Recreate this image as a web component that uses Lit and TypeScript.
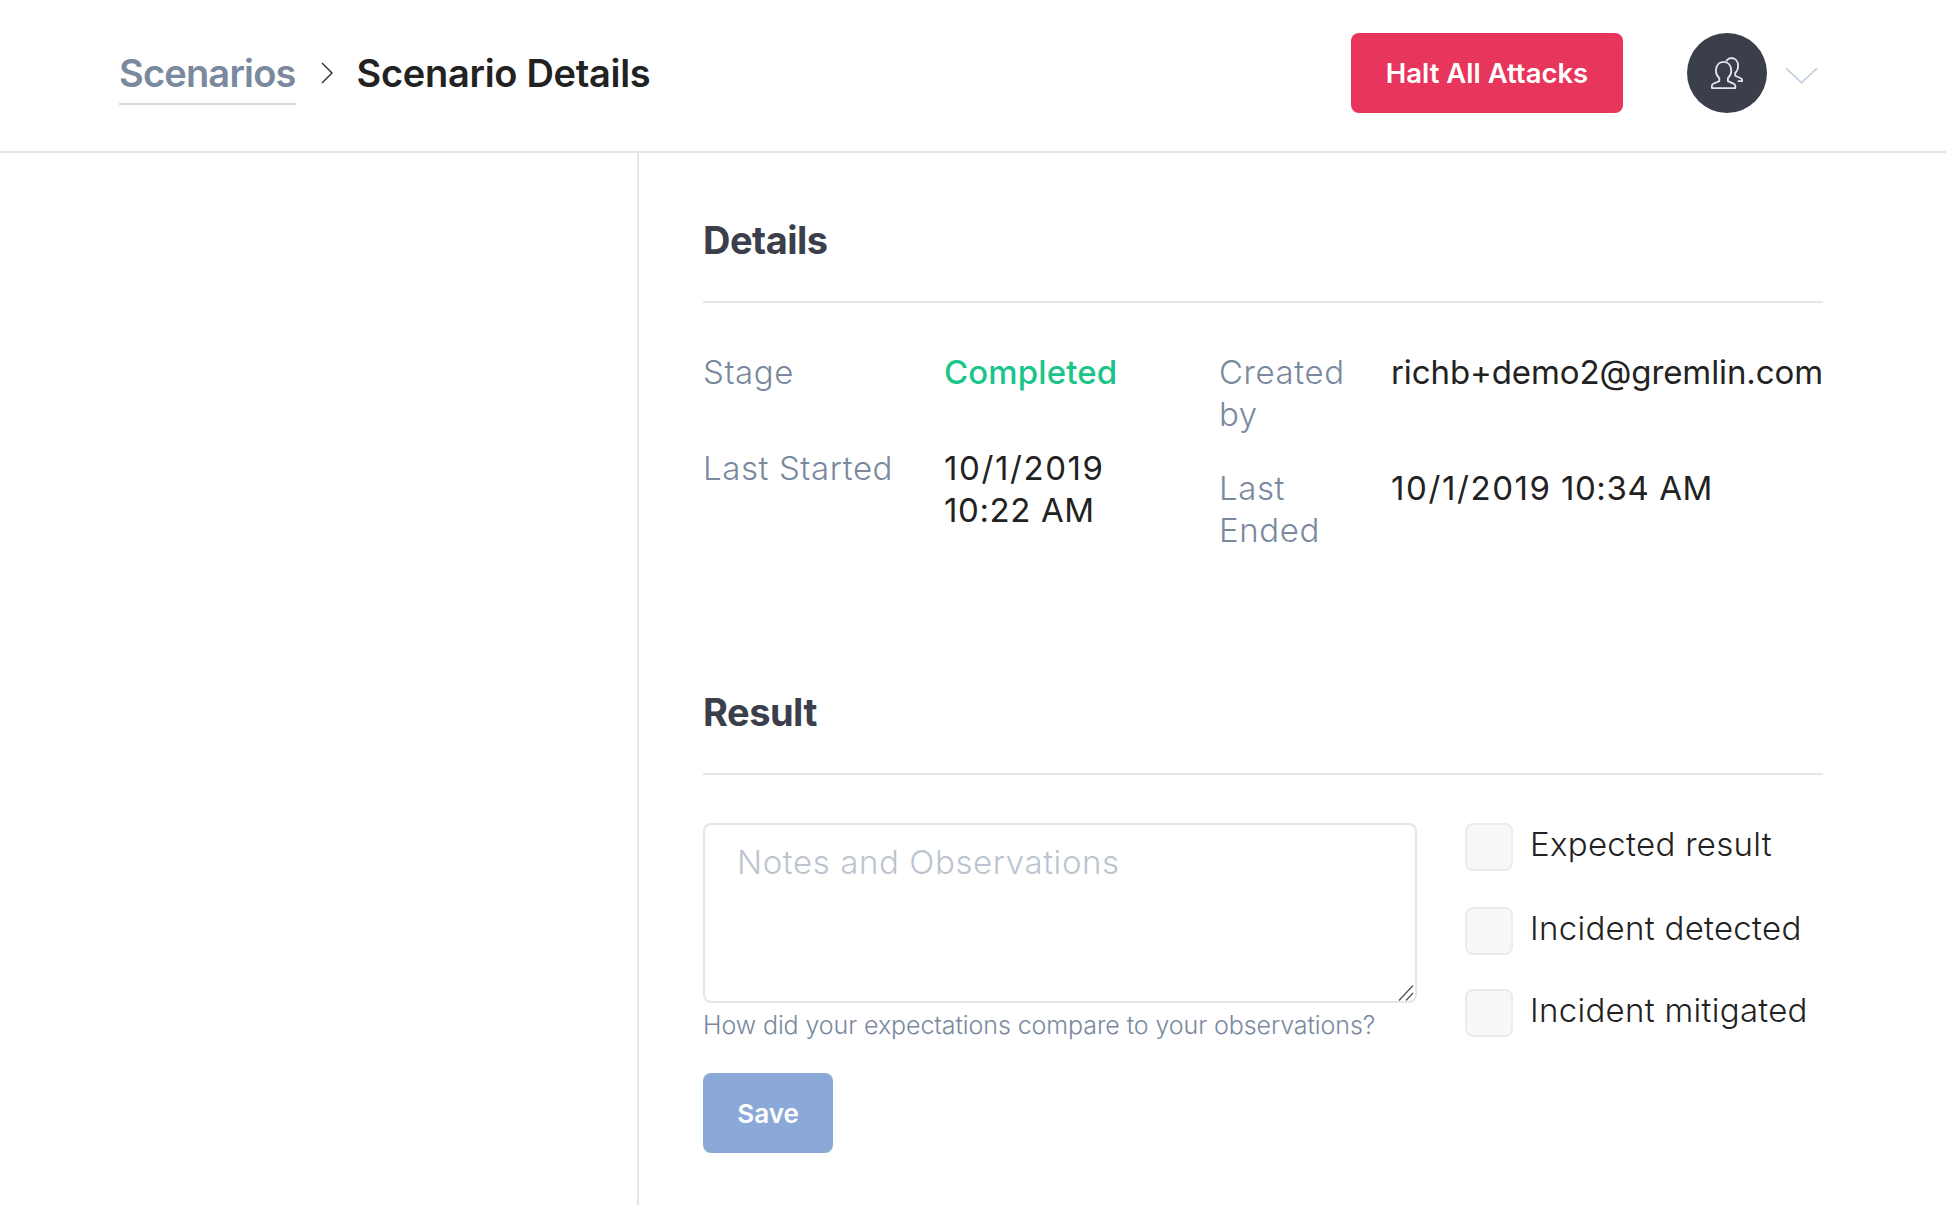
import { LitElement, html, css } from "lit";
import { customElement } from "lit/decorators.js";

@customElement("app-root")
export class AppRoot extends LitElement {
  static styles = css`
    :host { display: block; height: 1205px; overflow: hidden; background: #fff; font-family: Inter, "Liberation Sans", sans-serif; color: #222; }
    * { box-sizing: border-box; }
    header { height: 153px; border-bottom: 2px solid #e6e6e6; display: flex; align-items: flex-start; padding: 33px 0 0 119px; }
    .crumbs { display: flex; align-items: center; height: 80px; flex: 1; font-size: 38px; font-weight: 600; letter-spacing: -0.3px; }
    .link { color: #7a899e; border-bottom: 2px solid #d3d9e1; height: 62px; line-height: 60px; margin-top: 2px; letter-spacing: -0.8px; }
    .sep { margin: 0 25px 0 25px; display: block; }
    .current { margin-left: -1px; }
    .halt { width: 272px; height: 80px; border-radius: 8px; background: #e8355c; color: #fff; font: 600 27.5px Inter, sans-serif; border: 0; padding: 0; }
    .avatar { width: 80px; height: 80px; border-radius: 50%; background: #3b3f4c; margin-left: 64px; display: flex; align-items: center; justify-content: center; }
    .caret { margin: 34px 128px 0 18px; display: block; width: 33px; }
    main { display: flex; height: 1052px; }
    aside { width: 639px; border-right: 2px solid #e6e6e6; flex: none; }
    .content { width: 1120px; margin-left: 64px; padding-top: 64px; }
    h2 { margin: 0; font-size: 38px; line-height: 46px; font-weight: 700; color: #3b3f4c; letter-spacing: -0.5px; padding-bottom: 38px; border-bottom: 2px solid #e6e6e6; }
    .details { display: flex; padding-top: 48px; height: 386px; font-size: 33px; line-height: 42px; }
    .pair { display: grid; align-content: start; }
    .left { width: 516px; grid-template-columns: 241px 1fr; row-gap: 54px; }
    .right { flex: 1; grid-template-columns: 172px 1fr; row-gap: 32px; }
    .k { color: #7a899e; font-weight: 300; letter-spacing: 0.6px; }
    .v { color: #222; font-weight: 400; white-space: nowrap; letter-spacing: -0.1px; }
    .ok { color: #1bc48a; font-weight: 500; letter-spacing: 0.1px; }
    .date { letter-spacing: 1.6px; }
    .time { letter-spacing: 0.6px; }
    .result { display: flex; margin-top: 48px; }
    .form { width: 714px; flex: none; }
    .field { position: relative; height: 180px; }
    textarea { display: block; width: 714px; height: 180px; border: 2px solid #e6e6e6; border-radius: 8px; padding: 16px 32px; font: 300 33px/42px Inter, sans-serif; letter-spacing: 0.6px; resize: none; outline: 0; }
    textarea::placeholder { color: #bcc4d0; opacity: 1; }
    .grip { position: absolute; right: 3px; bottom: 2px; display: block; }
    .hint { font-size: 25px; line-height: 34px; color: #7a899e; font-weight: 300; margin-top: 5px; letter-spacing: -0.09px; }
    .save { display: block; width: 130px; height: 80px; margin-top: 31px; background: #8aa9d8; color: #fff; border: 0; border-radius: 8px; font: 600 26px Inter, sans-serif; padding: 0; }
    .checks { margin-left: 48px; font-size: 33px; line-height: 42px; font-weight: 300; color: #222; letter-spacing: 0.3px; }
    .check { display: flex; height: 48px; margin-bottom: 36px; align-items: flex-start; white-space: nowrap; }
    .check:nth-child(2) { margin-bottom: 34px; }
    .box { width: 48px; height: 48px; border: 2px solid #ececec; border-radius: 8px; background: #f8f8f8; margin-right: 17px; flex: none; }
  `;

  render() {
    return html`
      <header>
        <div class="crumbs">
          <span class="link">Scenarios</span>
          <svg class="sep" width="12" height="22" viewBox="0 0 12 22" fill="none" stroke="#222" stroke-width="1.3"><path d="M1 1l10 10L1 21"/></svg>
          <span class="current">Scenario Details</span>
        </div>
        <button class="halt">Halt All Attacks</button>
        <div class="avatar">
          <svg width="32" height="32" viewBox="0 0 32 32" fill="none" stroke="#e4e6ea" stroke-width="1.8" stroke-linejoin="round" stroke-linecap="round">
            <path d="M.9 31.100v-2.300c0-1 .5-1.600 1.400-2l6-2.600v-3c-2-1.800-3.400-4.300-3.400-7.400 0-5.400 3.200-9 7.700-9s7.700 3.600 7.700 9c0 3.100-1.400 5.600-3.400 7.400v3l6 2.600c.9.400 1.400 1 1.400 2v2.300z"/>
            <path d="M15.500 3.600C17 1.900 18.800 1 20.500 1c3.900 0 6.600 3.300 6.600 8 0 3-1.100 5.400-2.900 7v2.800l5.500 2.500c.9.400 1.400 1 1.400 1.900v1h-3.600"/>
          </svg>
        </div>
        <svg class="caret" width="33" height="17" viewBox="0 0 32 16" fill="none" stroke="#c4cfe1" stroke-width="1.6"><path d="M1 1l15 14L31 1"/></svg>
      </header>
      <main>
        <aside></aside>
        <div class="content">
          <h2>Details</h2>
          <div class="details">
            <div class="pair left">
              <div class="k">Stage</div><div class="v ok">Completed</div>
              <div class="k">Last Started</div><div class="v"><span class="date">10/1/2019</span><br /><span class="time">10:22 AM</span></div>
            </div>
            <div class="pair right">
              <div class="k">Created<br />by</div><div class="v">richb+demo2@gremlin.com</div>
              <div class="k">Last<br />Ended</div><div class="v"><span class="date">10/1/2019</span> <span class="time">10:34 AM</span></div>
            </div>
          </div>
          <h2>Result</h2>
          <div class="result">
            <div class="form">
              <div class="field">
                <textarea placeholder="Notes and Observations"></textarea>
                <svg class="grip" width="16" height="16" viewBox="0 0 16 16" fill="none" stroke="#555" stroke-width="1.300"><path d="M1 15.500L15 .5M8 15.500l7-7.500"/></svg>
              </div>
              <div class="hint">How did your expectations compare to your observations?</div>
              <button class="save">Save</button>
            </div>
            <div class="checks">
              <div class="check"><span class="box"></span>Expected result</div>
              <div class="check"><span class="box"></span>Incident detected</div>
              <div class="check"><span class="box"></span>Incident mitigated</div>
            </div>
          </div>
        </div>
      </main>
    `;
  }
}
